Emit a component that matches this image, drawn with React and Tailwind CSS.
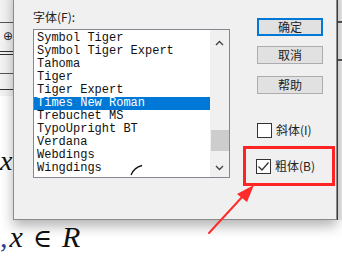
import React from "react";

const fonts = [
  "Symbol Tiger",
  "Symbol Tiger Expert",
  "Tahoma",
  "Tiger",
  "Tiger Expert",
  "Times New Roman",
  "Trebuchet MS",
  "TypoUpright BT",
  "Verdana",
  "Webdings",
  "Wingdings",
];

const cjk = "font-['Microsoft_YaHei','Noto_Sans_CJK_SC',sans-serif]";

const Check = ({ checked }) => (
  <span className="flex h-[15px] w-[15px] items-center justify-center border border-[#333] bg-white">
    {checked && (
      <svg width="13" height="13" viewBox="0 0 13 13">
        <path d="M1.5 6.5 L5 10 L11.5 2.5" fill="none" stroke="#333" strokeWidth="1.3" />
      </svg>
    )}
  </span>
);

const Button = ({ children, primary }) => (
  <button
    className={`flex h-[18px] w-[66px] items-center justify-center bg-[#e1e1e1] text-[12px] leading-none text-[#222] ${cjk} ${
      primary ? "border-2 border-[#0078d7]" : "border border-[#adadad]"
    }`}
  >
    {children}
  </button>
);

export default function App() {
  return (
    <div className="relative h-[261px] w-[342px] overflow-hidden bg-white">
      {/* document behind the dialog */}
      <div className="absolute left-0 top-0 h-[96px] w-[13px] bg-[#f3f3f3]">
        <div className="mt-[22px] h-px bg-[#555]" />
        <div className="ml-[3px] mt-[7px] text-[12px] leading-none text-[#222] font-['DejaVu_Sans',sans-serif]">⊕</div>
        <div className="mt-[9px] h-px bg-[#333]" />
        <div className="mt-[2px] h-px bg-[#333]" />
        <div className="mt-[18px] h-px bg-[#555]" />
        <div className="mt-[15px] h-px bg-[#333]" />
      </div>
      <div className="absolute left-0 top-[147px] text-[28px] italic leading-none text-[#111] font-['Liberation_Serif',serif]">
        x
      </div>
      <div className="absolute left-0 top-[222px] flex items-baseline text-[30px] leading-none text-[#111] font-['Liberation_Serif',serif]">
        <span className="text-[#2a3f8f]">,</span>
        <span className="ml-[2px] italic">x</span>
        <span className="ml-[10px] not-italic text-[26px] font-['DejaVu_Serif',serif]">∈</span>
        <span className="ml-[10px] italic">R</span>
      </div>
      <div className="absolute right-0 top-0 h-[220px] w-[5px] border-l border-[#444] bg-[#ececec]">
        <div className="mt-[21px] h-[2px] bg-[#555]" />
        <div className="mt-[36px] h-[2px] bg-[#555]" />
      </div>

      {/* dialog */}
      <div className="absolute left-[13px] top-[-12px] flex h-[232px] w-[324px] border border-[#8a8a8a] bg-[#f0f0f0] pt-[20px] shadow-[0_6px_12px_rgba(0,0,0,0.3)]">
        <div className="ml-[19px] flex flex-col">
          <div className={`h-[16px] text-[12px] leading-[16px] text-[#222] ${cjk}`}>字体(F):</div>
          <div className="mt-[4px] flex h-[149px] w-[197px] border border-[#828790] bg-white">
            <div className="flex flex-1 flex-col pt-[2px] font-['Liberation_Mono',monospace] text-[12px] leading-[13px] text-[#111]">
              {fonts.map((f) => (
                <div
                  key={f}
                  className={`h-[13px] whitespace-pre pl-[3px] ${
                    f === "Times New Roman" ? "bg-[#0078d7] text-white" : ""
                  }`}
                >
                  {f}
                </div>
              ))}
              <svg className="ml-[96px] mt-[-11px]" width="14" height="12" viewBox="0 0 14 12">
                <path d="M1 11 C3 6 6 3 12 1.5" fill="none" stroke="#111" strokeWidth="1.3" />
              </svg>
            </div>
            <div className="flex w-[19px] flex-col items-center bg-[#f0f0f0]">
              <svg className="mt-[10px]" width="9" height="6" viewBox="0 0 9 6">
                <path d="M1 5 L4.5 1.5 L8 5" fill="none" stroke="#444" strokeWidth="1.4" />
              </svg>
              <div className="mt-[84px] h-[21px] w-[18px] bg-[#cdcdcd]" />
              <svg className="mt-[14px]" width="9" height="6" viewBox="0 0 9 6">
                <path d="M1 1 L4.5 4.5 L8 1" fill="none" stroke="#444" strokeWidth="1.4" />
              </svg>
            </div>
          </div>
        </div>

        <div className="ml-[27px] flex flex-col pt-[9px]">
          <Button primary>确定</Button>
          <div className="mt-[10px]">
            <Button>取消</Button>
          </div>
          <div className="mt-[12px]">
            <Button>帮助</Button>
          </div>
          <div className={`mt-[27px] flex items-center gap-[4px] text-[12px] text-[#222] ${cjk}`}>
            <Check />
            <span>斜体(I)</span>
          </div>
          <div className="ml-[-14px] mt-[7px] flex h-[40px] w-[92px] items-center border-[3px] border-[#ff2323] pl-[10px]">
            <div className={`flex items-center gap-[4px] text-[12px] text-[#222] ${cjk}`}>
              <Check checked />
              <span>粗体(B)</span>
            </div>
          </div>
        </div>
      </div>

      {/* red arrow */}
      <svg className="absolute left-[205px] top-[182px]" width="55" height="56" viewBox="0 0 55 56">
        <path d="M4 51 L38 14" stroke="#ff2a2a" strokeWidth="2" strokeLinecap="round" />
        <path d="M49 3 L32 12 L42 20 Z" fill="#ff2a2a" />
      </svg>
    </div>
  );
}
